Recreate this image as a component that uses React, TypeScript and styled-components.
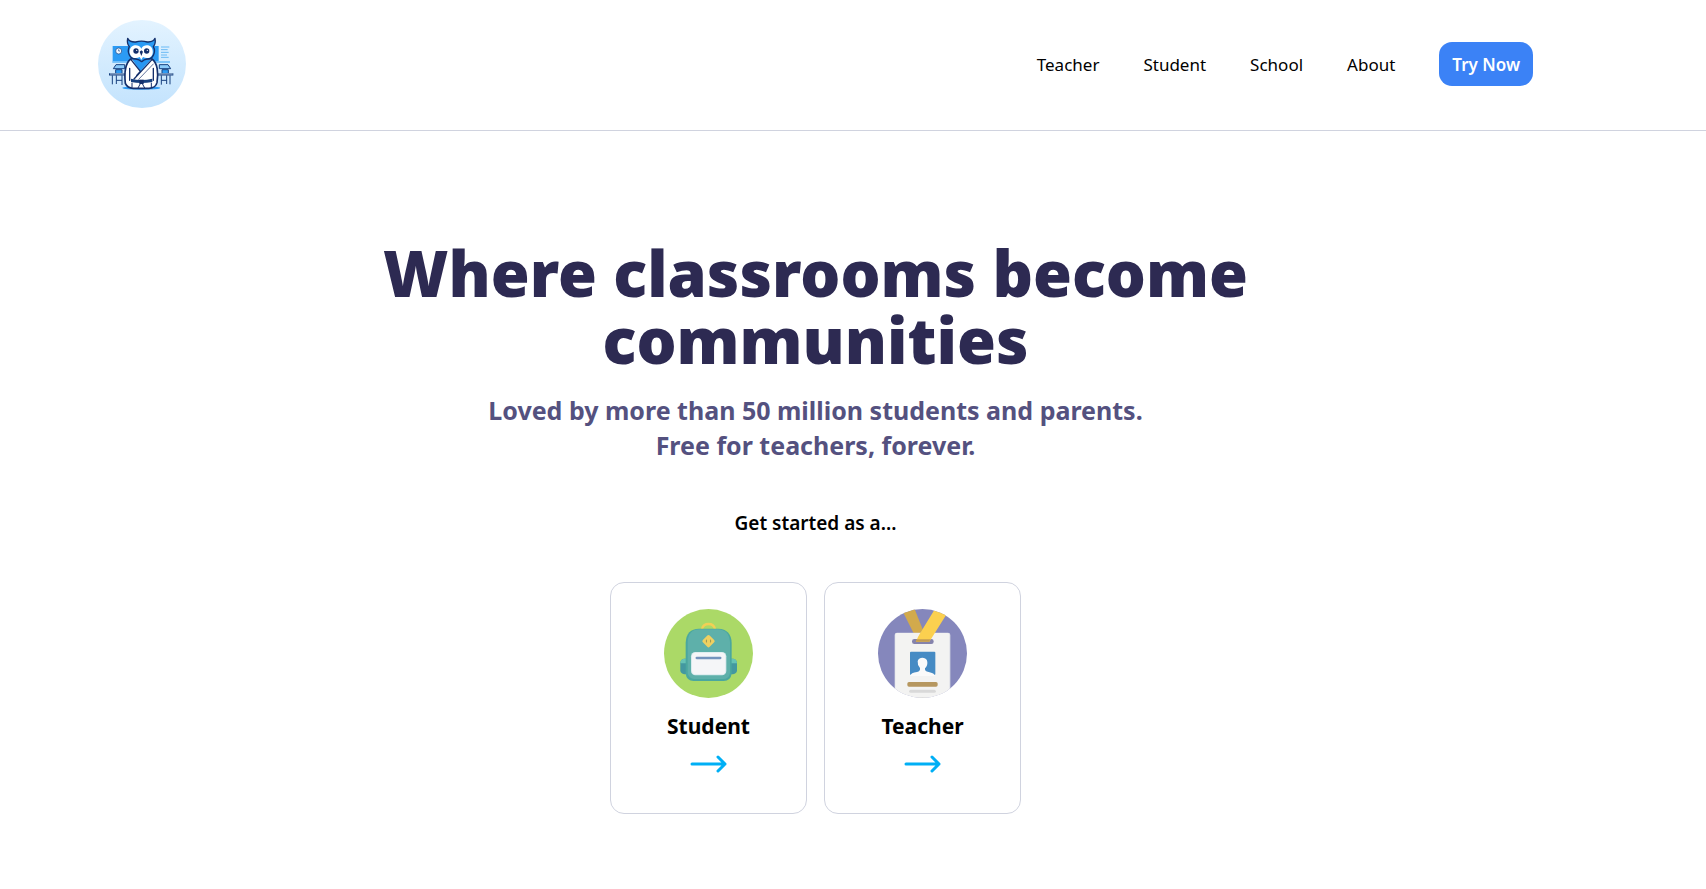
import React from "react";
import styled, { createGlobalStyle } from "styled-components";

const GlobalStyle = createGlobalStyle`
  *, *::before, *::after { box-sizing: border-box; }
  body {
    margin: 0;
    background: #fff;
    color: #000;
    font-family: "Segoe UI", "Noto Sans", "Open Sans", sans-serif;
  }
  h1, h2, h3, p { margin: 0; }
`;

const Header = styled.header`
  display: flex;
  align-items: center;
  justify-content: space-between;
  padding: 20px 173px 22px 98px;
  border-bottom: 1px solid #d0d3df;
`;

const LogoLink = styled.a`
  display: block;
  line-height: 0;
`;

const Nav = styled.nav`
  display: flex;
  align-items: center;
  gap: 44px;
`;

const NavLink = styled.a`
  padding-top: 2px;
  color: #000;
  font-size: 17px;
  line-height: 28px;
  text-decoration: none;
`;

const TryButton = styled.button`
  padding: 9px 13px 7px;
  border: 0;
  border-radius: 13px;
  background: #3b82f6;
  color: #fff;
  font-family: inherit;
  font-size: 17px;
  font-weight: 600;
  line-height: 28px;
  cursor: pointer;
`;

const Hero = styled.main`
  display: flex;
  flex-direction: column;
  align-items: center;
  padding: 108px 173px 74px 98px;
  text-align: center;
`;

const Title = styled.h1`
  max-width: 980px;
  color: #2d2a52;
  font-size: 63px;
  font-weight: 900;
  line-height: 67px;
`;

const Tagline = styled.h2`
  margin-top: 20px;
  color: #54517f;
  font-size: 25px;
  font-weight: 700;
  line-height: 35px;
`;

const Prompt = styled.p`
  margin-top: 46px;
  font-size: 19px;
  font-weight: 600;
  line-height: 28px;
`;

const Cards = styled.div`
  display: flex;
  gap: 17px;
  margin-top: 45px;
`;

const Card = styled.a`
  display: flex;
  flex-direction: column;
  align-items: center;
  width: 197px;
  padding: 26px 16px 40px;
  border: 1px solid #d0d3df;
  border-radius: 14px;
  color: #000;
  text-decoration: none;
`;

const CardTitle = styled.h3`
  margin: 12px 0 13px;
  font-size: 21px;
  font-weight: 700;
  line-height: 32px;
`;

const OwlLogo = () => (
  <svg width="88" height="88" viewBox="24 30 264 264" role="img" aria-label="Owl classroom">
    <defs>
      <linearGradient id="sky" x1="0" y1="0" x2="0" y2="1">
        <stop offset="0" stopColor="#e3f3ff" />
        <stop offset="1" stopColor="#c3e3fd" />
      </linearGradient>
    </defs>
    <circle cx="156" cy="162" r="132" fill="url(#sky)" />
    <rect x="68" y="108" width="138" height="46" fill="#2b9bf4" />
    <path d="M67 156H240" stroke="#62b7f7" strokeWidth="4" />
    <circle cx="86" cy="123" r="9" fill="#f2f9ff" stroke="#17407f" strokeWidth="2" />
    <path d="M86 118V123H90" stroke="#17407f" strokeWidth="2" fill="none" />
    <path d="M213 111H238M213 119H233M213 127H236M213 135H231M213 142H236" stroke="#6abaf5" strokeWidth="3" />
    <g stroke="#17407f" strokeWidth="3" fill="none">
      <path d="M70 176L78 164H104V176Z" fill="#8ccbfa" />
      <path d="M208 176V164H234L242 176Z" fill="#8ccbfa" />
      <path d="M77 190V179H96V190M216 190V179H235V190" fill="#2d9bf4" />
      <path d="M57 193H110M202 193H250" strokeWidth="7" />
      <path d="M60 192H108M204 192H248" stroke="#e8f5ff" strokeWidth="2" />
      <path d="M67 196V223M79 196V222M96 196V225M214 196V224M230 196V222M240 196V223" />
      <path d="M79 211H96M214 211H230" />
    </g>
    <ellipse cx="154" cy="234" rx="57" ry="5" fill="#319cf3" />
    <path d="M122 147C106 160 103 192 106 220Q112 234 130 235H177Q197 234 201 218C206 188 202 158 186 147Z" fill="#fff" stroke="#142f6b" strokeWidth="5" strokeLinejoin="round" />
    <path d="M126 148L151 184L183 149Z" fill="#2797f3" />
    <path d="M113 85Q119 97 137 96Q154 91 172 96Q190 97 195 85Q198 101 190 110C199 127 188 148 171 147Q162 148 155 155Q147 148 138 147C119 147 110 126 118 110Q110 101 113 85Z" fill="#2b9bf4" stroke="#142f6b" strokeWidth="4" strokeLinejoin="round" />
    <path d="M154 116C146 101 122 103 119 122C117 140 134 150 149 141L154 149L159 141C174 150 191 140 188 122C186 103 162 101 154 116Z" fill="#fff" />
    <circle cx="138" cy="123" r="8" fill="#142f6b" />
    <circle cx="170" cy="123" r="8" fill="#142f6b" />
    <circle cx="140" cy="121" r="2" fill="#fff" />
    <circle cx="172" cy="121" r="2" fill="#fff" />
    <path d="M149 125L154 121L159 125L154 138Z" fill="#142f6b" />
    <g fill="none" stroke="#142f6b" strokeWidth="4" strokeLinejoin="round" strokeLinecap="round">
      <path d="M123 149L151 184M186 149L132 207M151 184L140 196M119 175V211M190 175V211" />
      <path d="M190 162L146 208" strokeWidth="2" />
    </g>
    <path d="M123 206Q154 214 187 206V216Q154 222 123 216Z" fill="#17407f" />
    <path d="M148 209H161V222H148Z" fill="#142f6b" />
    <path d="M151 221L144 234M157 221L164 234M126 218V232M184 218V232" stroke="#142f6b" strokeWidth="3" />
  </svg>
);

const BackpackIcon = () => (
  <svg width="89" height="89" viewBox="27 27 267 267" aria-hidden="true">
    <circle cx="160.500" cy="160.500" r="133.500" fill="#abd967" />
    <path d="M141 87C146 67 175 67 180 87" fill="none" stroke="#f3cf55" strokeWidth="7" />
    <path d="M94 176H87Q76 178 76 190V212Q77 220 88 223H97Z" fill="#4398a0" />
    <path d="M228 176H235Q246 178 246 190V212Q245 220 234 223H225Z" fill="#4398a0" />
    <path d="M76 190Q76 178 87 176H94V190ZM228 176H235Q246 178 246 190H228Z" fill="#66c3b5" />
    <path d="M92 128Q94 86 132 86H190Q228 87 230 128V221Q227 242 206 243H116Q94 241 92 221Z" fill="#4aa79f" />
    <path d="M98 126Q100 88 134 88H188Q222 89 225 126V219Q222 237 204 237H118Q101 236 98 219Z" fill="#5eb0aa" />
    <rect x="146" y="109" width="29" height="29" rx="5" transform="rotate(45 160.500 123.500)" fill="#efd061" />
    <path d="M156 117L152 123L156 130ZM165 117L169 123L165 130Z" fill="#9d9753" />
    <rect x="108" y="156" width="106" height="70" rx="13" fill="#d8ebee" />
    <rect x="111" y="158" width="100" height="65" rx="11" fill="#f5f6f8" />
    <path d="M125 174H196" stroke="#7494bd" strokeWidth="7" strokeLinecap="round" />
  </svg>
);

const BadgeIcon = () => (
  <svg width="89" height="89" viewBox="30 27 267 267" aria-hidden="true">
    <defs>
      <clipPath id="badge-disc"><circle cx="163.500" cy="160.500" r="133.500" /></clipPath>
    </defs>
    <g clipPath="url(#badge-disc)">
      <rect x="30" y="27" width="267" height="267" fill="#8587bc" />
      <path d="M97 20H137L164 88L147 120Z" fill="#d2aa4c" />
      <rect x="80" y="98" width="167" height="210" rx="7" fill="#dfe0e8" />
      <rect x="82" y="99" width="162" height="210" rx="6" fill="#f3f3f2" />
      <rect x="132" y="117" width="65" height="15" rx="7" fill="#8583ac" />
      <path d="M205 20H250L184 125H144Q149 111 155 102Z" fill="#fbd04f" />
      <path d="M146 118H188L183 125H143Z" fill="#c29c54" />
      <rect x="126" y="155" width="76" height="70" rx="3" fill="#468bc4" />
      <path d="M126 228Q129 218 147 216Q158 213 156 204Q148 196 149 184Q151 173 164 173Q177 174 178 186Q179 198 171 205Q169 214 182 216Q199 219 202 228Z" fill="#fafafa" />
      <rect x="118" y="246" width="91" height="14" rx="5" fill="#b6975f" />
      <path d="M128 274H199" stroke="#d9d9d9" strokeWidth="9" strokeLinecap="round" />
      <path d="M145 293H184" stroke="#dedede" strokeWidth="4" />
    </g>
  </svg>
);

const ArrowIcon = () => (
  <svg width="37" height="18" viewBox="0 0 37 18" fill="none" stroke="#00aff5" aria-hidden="true">
    <path d="M2 9H35M28 2L35 9L28 16" strokeWidth="3" strokeLinecap="round" strokeLinejoin="round" />
  </svg>
);

const navItems = ["Teacher", "Student", "School", "About"];

const roles = [
  { name: "Student", Icon: BackpackIcon },
  { name: "Teacher", Icon: BadgeIcon },
];

export default function App() {
  return (
    <>
      <GlobalStyle />
      <Header>
        <LogoLink href="#"><OwlLogo /></LogoLink>
        <Nav>
          {navItems.map((item) => (
            <NavLink key={item} href={`#${item.toLowerCase()}`}>{item}</NavLink>
          ))}
          <TryButton type="button">Try Now</TryButton>
        </Nav>
      </Header>
      <Hero>
        <Title>Where classrooms become communities</Title>
        <Tagline>
          Loved by more than 50 million students and parents.
          <br />
          Free for teachers, forever.
        </Tagline>
        <Prompt>Get started as a...</Prompt>
        <Cards>
          {roles.map(({ name, Icon }) => (
            <Card key={name} href={`#start-${name.toLowerCase()}`}>
              <Icon />
              <CardTitle>{name}</CardTitle>
              <ArrowIcon />
            </Card>
          ))}
        </Cards>
      </Hero>
    </>
  );
}
